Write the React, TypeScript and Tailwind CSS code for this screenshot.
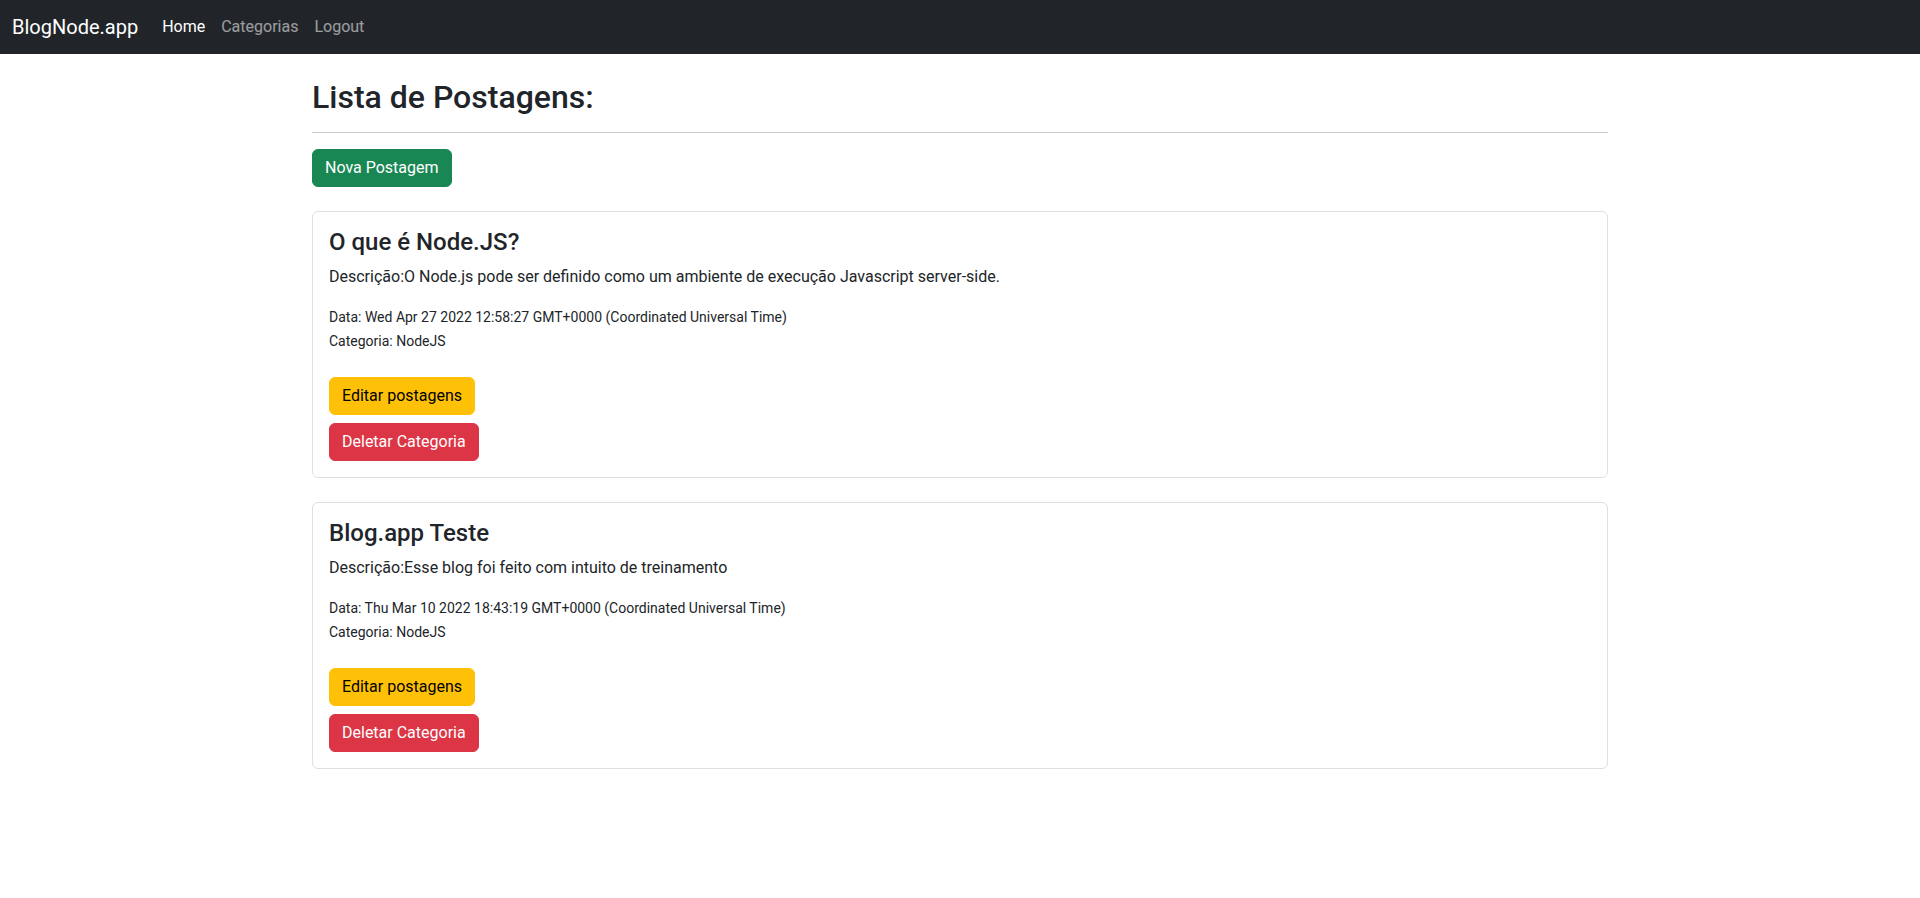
import React from "react";

type Post = {
  titulo: string;
  descricao: string;
  data: string;
  categoria: string;
};

const posts: Array<Post> = [
  {
    titulo: "O que é Node.JS?",
    descricao:
      "O Node.js pode ser definido como um ambiente de execução Javascript server-side.",
    data: "Wed Apr 27 2022 12:58:27 GMT+0000 (Coordinated Universal Time)",
    categoria: "NodeJS",
  },
  {
    titulo: "Blog.app Teste",
    descricao: "Esse blog foi feito com intuito de treinamento",
    data: "Thu Mar 10 2022 18:43:19 GMT+0000 (Coordinated Universal Time)",
    categoria: "NodeJS",
  },
];

const Navbar = () => (
  <nav className="flex h-[54px] items-center bg-[#212529] px-3">
    <a className="mr-4 text-[20px] leading-[30px] text-white">BlogNode.app</a>
    <a className="px-2 text-base text-white">Home</a>
    <a className="px-2 text-base text-white/55">Categorias</a>
    <a className="px-2 text-base text-white/55">Logout</a>
  </nav>
);

const PostCard = ({ post }: { post: Post }) => (
  <div className="rounded-md border border-black/[0.125] p-4">
    <h4 className="mb-2 text-[24px] font-medium leading-[1.2]">{post.titulo}</h4>
    <p className="mb-4 leading-6">Descrição:{post.descricao}</p>
    <p className="text-sm leading-6">
      Data: {post.data}
      <br />
      Categoria: {post.categoria}
    </p>
    <div className="mt-6 flex flex-col items-start gap-2">
      <button className="rounded-md border border-[#ffc107] bg-[#ffc107] px-3 py-1.5 leading-6 text-black">
        Editar postagens
      </button>
      <button className="rounded-md border border-[#dc3545] bg-[#dc3545] px-3 py-1.5 leading-6 text-white">
        Deletar Categoria
      </button>
    </div>
  </div>
);

const App = () => {
  return (
    <div className="min-h-screen bg-white font-['Roboto',sans-serif] text-base text-[#212529]">
      <Navbar />
      <div className="mx-auto mt-6 w-[1320px] px-3">
        <h2 className="text-[32px] font-medium leading-[1.2]">Lista de Postagens:</h2>
        <hr className="my-4 border-t border-[#c8c9ca]" />
        <button className="rounded-md border border-[#198754] bg-[#198754] px-3 py-1.5 leading-6 text-white">
          Nova Postagem
        </button>
        <div className="mt-6 flex flex-col gap-[24px]">
          {posts.map((post) => (
            <PostCard key={post.titulo} post={post} />
          ))}
        </div>
      </div>
    </div>
  );
};

export default App;
